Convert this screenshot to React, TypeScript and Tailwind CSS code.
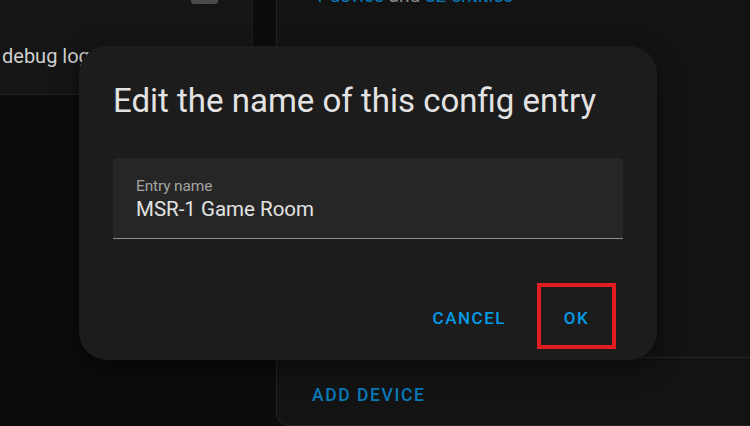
const font = { fontFamily: "Roboto, 'Noto Sans', sans-serif" };

const BackgroundPage = () => (
    <div className="flex w-full h-full">
        <div className="w-[253px] shrink-0">
            <div className="h-[95px] bg-[#151515] border-b border-r border-[#1e1e1e] rounded-br-[2px]">
                <div className="ml-[191px] h-[4px] w-[27px] rounded-b-[3px] bg-[#4a4a4a]" />
                <div className="pl-[2px] mt-[40px] text-[20px] leading-[24px] text-[#cfcfcf]">
                    debug logging
                </div>
            </div>
        </div>

        <div className="w-[23px] shrink-0" />

        <div className="flex-1 h-[426px] bg-[#131313] border-l border-b border-[#242424] rounded-bl-[14px] flex flex-col">
            <div className="pl-[37px] -mt-[15px] text-[19px] leading-[22px] whitespace-nowrap">
                <span className="text-[#0a79b8]">1 device</span>
                <span className="text-[#8a8a8a]"> and </span>
                <span className="text-[#0a79b8]">82 entities</span>
            </div>
            <div className="mt-[350px] h-px bg-[#262626]" />
            <div className="pl-[35px] mt-[24px] text-[17.5px] font-medium tracking-[0.09em] text-[#0a79b8]">
                ADD DEVICE
            </div>
        </div>
    </div>
);

const EditDialog = () => (
    <div className="absolute left-[79px] top-[46px] w-[578px] h-[314px] rounded-[28px] bg-[#1c1c1c] shadow-[0_8px_24px_rgba(0,0,0,0.5)] flex flex-col px-[34px] pt-[35px]">
        <h2 className="text-[33px] leading-[40px] text-[#e3e3e3] whitespace-nowrap">
            Edit the name of this config entry
        </h2>

        <div className="mt-[37px] h-[81px] bg-[#262626] rounded-t-[4px] border-b border-[#8e8e8e] flex flex-col pl-[23px] pt-[19px]">
            <span className="text-[15.5px] leading-[18px] text-[#a3a3a3] tracking-[-0.01em]">Entry name</span>
            <span className="mt-[1px] text-[20.5px] leading-[26px] text-[#e3e3e3]">MSR-1 Game Room</span>
        </div>

        <div className="mt-[44px] flex items-center justify-end gap-[31px] pr-[7px]">
            <button className="pt-[5px] text-[17px] font-medium tracking-[0.09em] text-[#039be5]">CANCEL</button>
            <div className="w-[79px] h-[66px] border-4 border-[#e31b23] flex items-center justify-center">
                <button className="pt-[5px] text-[17px] font-medium tracking-[0.09em] text-[#039be5]">OK</button>
            </div>
        </div>
    </div>
);

export default function App() {
    return (
        <div className="relative w-[750px] h-[426px] overflow-hidden bg-[#0c0c0c]" style={font}>
            <BackgroundPage />
            <EditDialog />
        </div>
    );
}
